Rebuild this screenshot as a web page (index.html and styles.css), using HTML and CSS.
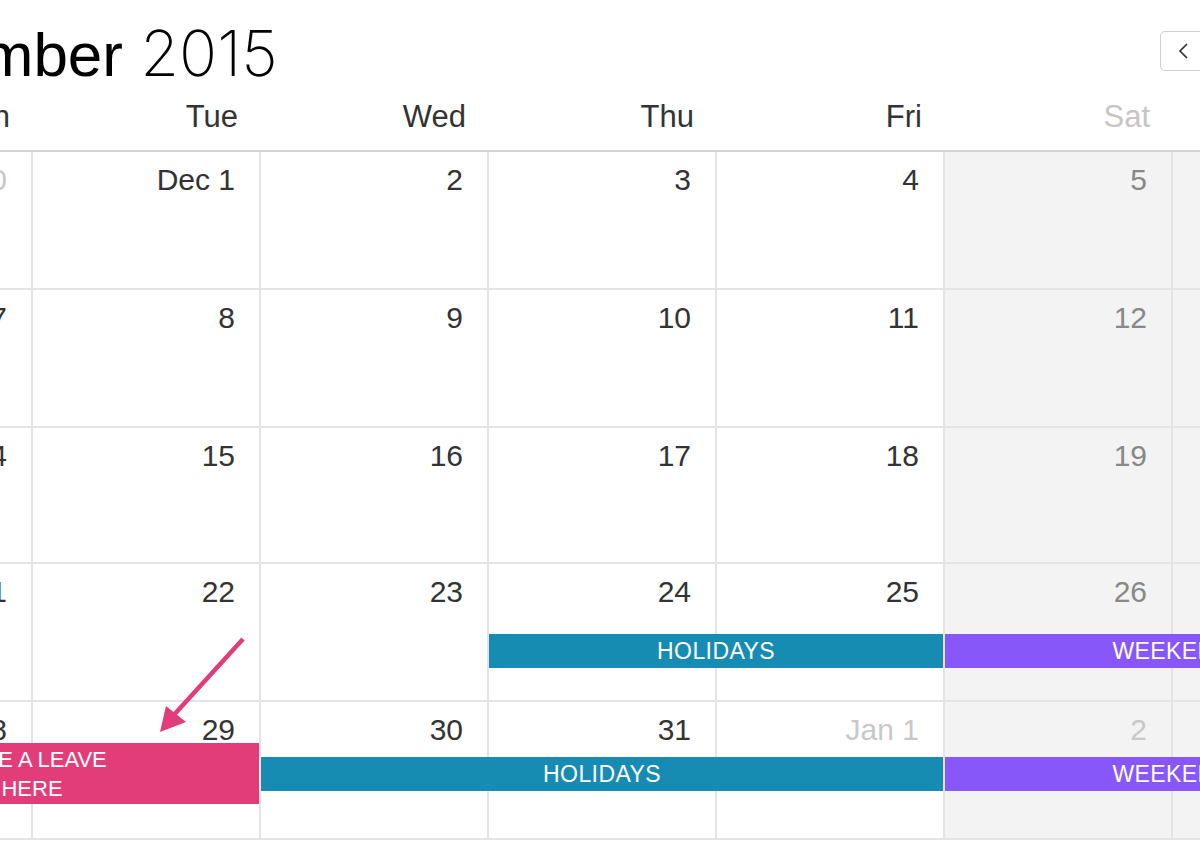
FILE: index.html
```html
<!DOCTYPE html>
<html lang="en">
<head>
<meta charset="utf-8">
<title>December 2015</title>
<link rel="stylesheet" href="styles.css">
</head>
<body>
<div class="calendar">
  <div class="toolbar">
    <h2 class="title"><span class="month">December</span> <span class="year">2015</span></h2>
    <div class="nav">
      <div class="btn-group">
        <button class="btn btn-icon" aria-label="prev"><svg width="12" height="18" viewBox="0 0 12 18"><polyline points="10,2 3,9 10,16" fill="none" stroke="#333" stroke-width="1.7"/></svg></button>
        <button class="btn btn-icon" aria-label="next"><svg width="12" height="18" viewBox="0 0 12 18"><polyline points="2,2 9,9 2,16" fill="none" stroke="#333" stroke-width="1.7"/></svg></button>
      </div>
      <button class="btn btn-today">today</button>
    </div>
  </div>

  <div class="head">
    <div class="dow">Mon</div>
    <div class="dow">Tue</div>
    <div class="dow">Wed</div>
    <div class="dow">Thu</div>
    <div class="dow">Fri</div>
    <div class="dow dow-weekend">Sat</div>
    <div class="dow dow-weekend">Sun</div>
  </div>

  <div class="week">
    <div class="day other">30</div>
    <div class="day">Dec 1</div>
    <div class="day">2</div>
    <div class="day">3</div>
    <div class="day">4</div>
    <div class="day weekend">5</div>
    <div class="day weekend">6</div>
  </div>

  <div class="week">
    <div class="day">7</div>
    <div class="day">8</div>
    <div class="day">9</div>
    <div class="day">10</div>
    <div class="day">11</div>
    <div class="day weekend">12</div>
    <div class="day weekend">13</div>
  </div>

  <div class="week week-short">
    <div class="day">14</div>
    <div class="day">15</div>
    <div class="day">16</div>
    <div class="day">17</div>
    <div class="day">18</div>
    <div class="day weekend">19</div>
    <div class="day weekend">20</div>
  </div>

  <div class="week week-events-a">
    <div class="day">21</div>
    <div class="day">22</div>
    <div class="day">23</div>
    <div class="day">24</div>
    <div class="day">25</div>
    <div class="day weekend">26</div>
    <div class="day weekend">27</div>
    <div class="event ev-holiday cols-4-6">HOLIDAYS</div>
    <div class="event ev-weekend cols-6-8">WEEKEND</div>
  </div>

  <div class="week week-events-b">
    <div class="day">28</div>
    <div class="day">29</div>
    <div class="day">30</div>
    <div class="day">31</div>
    <div class="day other">Jan 1</div>
    <div class="day weekend other">2</div>
    <div class="day weekend other">3</div>
    <div class="event ev-leave cols-1-3">TAKE A LEAVE<br>HERE</div>
    <div class="event ev-holiday cols-3-6">HOLIDAYS</div>
    <div class="event ev-weekend cols-6-8">WEEKEND</div>
  </div>
</div>

<svg class="arrow" width="1200" height="842" viewBox="0 0 1200 842" aria-hidden="true">
  <line x1="243" y1="639" x2="172" y2="717" stroke="#e23d79" stroke-width="4.5"/>
  <polygon points="160,732 166,706 186,722" fill="#e23d79"/>
</svg>
</body>
</html>
```

FILE: styles.css
```css
html, body {
  margin: 0;
  padding: 0;
  background: #fff;
}

body {
  width: 1200px;
  height: 842px;
  overflow: hidden;
  position: relative;
  font-family: "Liberation Sans", Arial, sans-serif;
  color: #333;
}

.calendar {
  width: 1596px;
  margin-left: -197px;
}

/* toolbar */
.toolbar {
  display: flex;
  justify-content: space-between;
  align-items: flex-start;
  height: 62px;
  padding-top: 22px;
  margin-bottom: 15px;
}

.title {
  margin: 0 0 0 34px;
  height: 62px;
  font-size: 62px;
  line-height: 62px;
  font-weight: normal;
  color: #000;
  white-space: nowrap;
}

.month {
  font-family: "Liberation Sans", Arial, sans-serif;
  font-weight: 400;
}

.year {
  font-family: "Inter", "Roboto", "Liberation Sans", sans-serif;
  font-weight: 200;
  font-size: 63px;
  letter-spacing: 0;
}

.nav {
  width: 239px;
  display: flex;
  align-items: center;
  gap: 16px;
  margin-top: 9px;
}

.btn-group {
  display: flex;
}

.btn {
  height: 40px;
  box-sizing: border-box;
  border: 1px solid #cfcfcf;
  background: #fff;
  border-radius: 5px;
  font-family: "Liberation Sans", Arial, sans-serif;
  font-size: 18px;
  color: #333;
  padding: 0;
  display: flex;
  align-items: center;
  justify-content: center;
}

.btn-icon {
  width: 46px;
}

.btn-group .btn-icon:first-child {
  border-top-right-radius: 0;
  border-bottom-right-radius: 0;
}

.btn-group .btn-icon:last-child {
  border-left: none;
  border-top-left-radius: 0;
  border-bottom-left-radius: 0;
}

.btn-today {
  padding: 0 18px;
}

/* header */
.head {
  display: grid;
  grid-template-columns: repeat(7, 228px);
  border-bottom: 2px solid #d3d3d3;
  padding-bottom: 15px;
}

.dow {
  text-align: right;
  padding-right: 21px;
  font-size: 31px;
  line-height: 36px;
  color: #333;
}

.dow-weekend {
  color: #c9c5c7;
}

/* weeks */
.week {
  display: grid;
  grid-template-columns: repeat(7, 228px);
  grid-template-rows: 1fr;
  height: 138px;
  box-sizing: border-box;
  border-bottom: 2px solid #e4e4e4;
}

.week-short {
  height: 136px;
}

.week-events-a {
  grid-template-rows: 70px 34px 1fr;
}

.week-events-b {
  grid-template-rows: 41px 61px 1fr;
}

.day {
  grid-row: 1 / -1;
  border-left: 2px solid #e4e4e4;
  padding: 10px 24px 0 0;
  text-align: right;
  font-size: 30px;
  line-height: 36px;
  color: #333;
}

.day:nth-child(1) { grid-column: 1; }
.day:nth-child(2) { grid-column: 2; }
.day:nth-child(3) { grid-column: 3; }
.day:nth-child(4) { grid-column: 4; }
.day:nth-child(5) { grid-column: 5; }
.day:nth-child(6) { grid-column: 6; }
.day:nth-child(7) { grid-column: 7; }

.day.weekend {
  background: #f3f3f3;
  color: #888;
}

.day.other {
  color: #cbc7c9;
}

/* events */
.event {
  grid-row: 2;
  align-self: center;
  margin-left: 2px;
  color: #fff;
  font-size: 23px;
  letter-spacing: 0.4px;
  line-height: 34px;
  text-align: center;
  white-space: nowrap;
}

.cols-1-3 { grid-column: 1 / 3; }
.cols-3-6 { grid-column: 3 / 6; }
.cols-4-6 { grid-column: 4 / 6; }
.cols-6-8 { grid-column: 6 / 8; }

.ev-holiday {
  background: #168cb2;
}

.ev-weekend {
  background: #8757f9;
}

.ev-leave {
  background: #e23d79;
  font-size: 22px;
  letter-spacing: 0;
  line-height: 29px;
  padding: 1.5px 0;
}

.arrow {
  position: absolute;
  left: 0;
  top: 0;
  pointer-events: none;
}
```
